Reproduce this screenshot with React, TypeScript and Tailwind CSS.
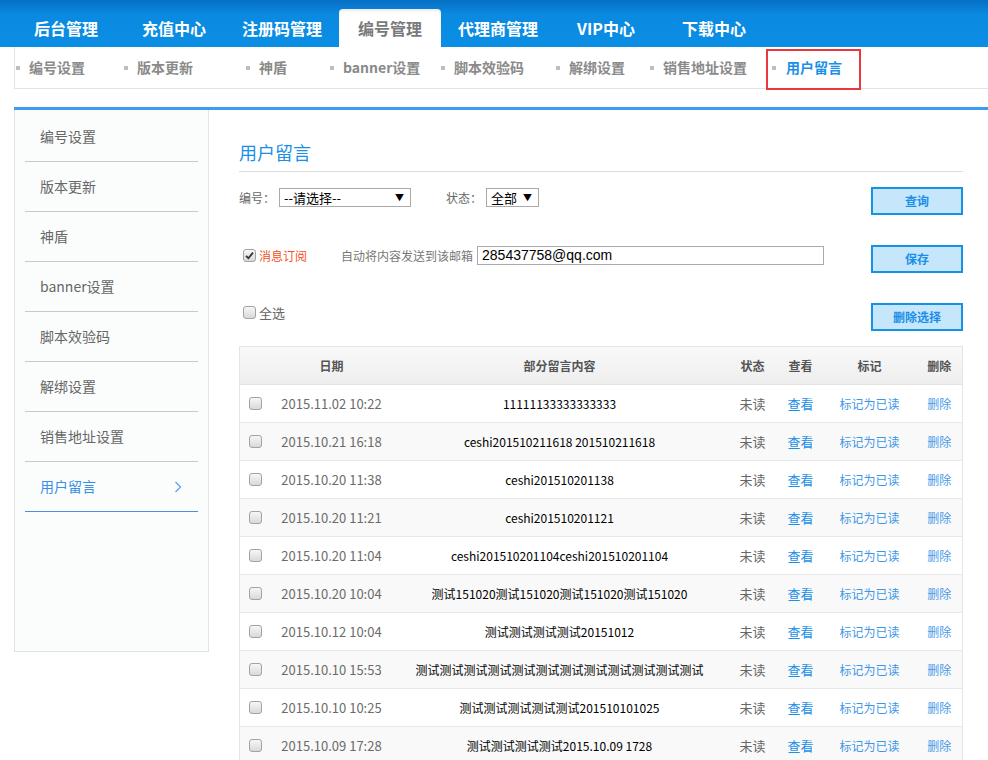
import React from "react";

const TABS = ["后台管理", "充值中心", "注册码管理", "编号管理", "代理商管理", "VIP中心", "下载中心"];

// bullet-to-bullet widths of the second-level menu
const SUBNAV: { label: string; w: string }[] = [
  { label: "编号设置", w: "w-[108px]" },
  { label: "版本更新", w: "w-[122px]" },
  { label: "神盾", w: "w-[84px]" },
  { label: "banner设置", w: "w-[111px]" },
  { label: "脚本效验码", w: "w-[115px]" },
  { label: "解绑设置", w: "w-[94px]" },
  { label: "销售地址设置", w: "w-[122px]" },
];

const SIDE = ["编号设置", "版本更新", "神盾", "banner设置", "脚本效验码", "解绑设置", "销售地址设置"];

const ROWS: [string, string][] = [
  ["2015.11.02 10:22", "11111133333333333"],
  ["2015.10.21 16:18", "ceshi201510211618 201510211618"],
  ["2015.10.20 11:38", "ceshi201510201138"],
  ["2015.10.20 11:21", "ceshi201510201121"],
  ["2015.10.20 11:04", "ceshi201510201104ceshi201510201104"],
  ["2015.10.20 10:04", "测试151020测试151020测试151020测试151020"],
  ["2015.10.12 10:04", "测试测试测试测试20151012"],
  ["2015.10.10 15:53", "测试测试测试测试测试测试测试测试测试测试测试测试"],
  ["2015.10.10 10:25", "测试测试测试测试测试201510101025"],
  ["2015.10.09 17:28", "测试测试测试测试2015.10.09 1728"],
];

function Check({ checked = false }: { checked?: boolean }) {
  return (
    <span className="inline-flex w-[13px] h-[13px] shrink-0 items-center justify-center rounded-[3px] border border-[#a3a3a3] bg-linear-to-b from-[#f7f7f7] to-[#d9d9d9]">
      {checked && (
        <svg width="9" height="9" viewBox="0 0 9 9">
          <path d="M1 4.8 L3.4 7.2 L8 1.6" fill="none" stroke="#333" strokeWidth="1.8" />
        </svg>
      )}
    </span>
  );
}

function Select({ value, w }: { value: string; w: string }) {
  return (
    <div className={`${w} h-[19px] flex items-center justify-between border border-[#a9a9a9] bg-white pl-[4px] pr-[6px] text-[13px] text-black leading-none`}>
      <span>{value}</span>
      <span className="text-[9px]">▼</span>
    </div>
  );
}

function Btn({ label }: { label: string }) {
  return (
    <button className="ml-auto w-[92px] h-[28px] shrink-0 border-2 border-[#1592e6] bg-[#c6e6fc] text-[12px] font-bold text-[#1a8fe8]">
      {label}
    </button>
  );
}

export default function App() {
  return (
    <div className="w-[988px] h-[760px] overflow-hidden bg-white font-['Noto_Sans_CJK_SC','Microsoft_YaHei',sans-serif]">
      {/* top tabs */}
      <header className="h-[47px] bg-linear-to-b from-[#066fc4] via-[#0a8ae0] via-30% to-[#0a8ee4] flex items-end pl-[15px] gap-[6px]">
        {TABS.map((t) => (
          <div
            key={t}
            className={`w-[102px] h-[38px] flex items-center justify-center text-[16px] font-bold ${
              t === "编号管理"
                ? "bg-white rounded-t-[4px] text-[#7a7a7a] shadow-[inset_0_2px_2px_rgba(0,0,0,0.08)]"
                : "text-white"
            }`}
          >
            {t}
          </div>
        ))}
      </header>

      {/* second-level menu */}
      <nav className="ml-[14px] h-[42px] border-l border-b border-[#e3e3e3] flex items-center pl-[1px]">
        {SUBNAV.map((s) => (
          <div key={s.label} className={`${s.w} flex items-center`}>
            <span className="w-[4px] h-[4px] bg-[#bdbdbd]" />
            <span className="ml-[9px] text-[14px] font-bold text-[#8a8a8a]">{s.label}</span>
          </div>
        ))}
        <div className="relative flex items-center h-full">
          <span className="w-[4px] h-[4px] bg-[#bdbdbd]" />
          <span className="ml-[10px] text-[14px] font-bold text-[#1a8fe8]">用户留言</span>
          <span className="absolute -left-[6px] top-[2px] w-[95px] h-[41px] border-2 border-[#e8383d]" />
        </div>
      </nav>

      <div className="mt-[18px] ml-[14px] h-[3px] bg-[#3a9cf2]" />

      <div className="flex items-start">
        {/* sidebar */}
        <aside className="ml-[14px] w-[195px] h-[542px] shrink-0 border border-t-0 border-[#e3e3e3] bg-[#fbfdfd] pt-[2px] px-[10px]">
          {SIDE.map((s) => (
            <div key={s} className="h-[50px] flex items-center border-b border-[#c9c9c9] pl-[15px] text-[14px] text-[#666]">
              {s}
            </div>
          ))}
          <div className="h-[50px] flex items-center justify-between border-b border-[#4a90e2] pl-[15px] pr-[16px] text-[14px] text-[#3a8ee6]">
            <span>用户留言</span>
            <svg width="8" height="12" viewBox="0 0 8 12">
              <path d="M1.5 1 L6.5 6 L1.5 11" fill="none" stroke="#5aa5ef" strokeWidth="1.3" />
            </svg>
          </div>
        </aside>

        {/* main */}
        <main className="flex-1 pl-[30px] pr-[26px]">
          <h1 className="pt-[30px] pb-[7px] border-b border-[#dcdcdc] text-[18px] leading-[24px] text-[#1a8fe8]">用户留言</h1>

          <div className="mt-[15px] flex items-start h-[28px]">
            <span className="mt-[1px] h-[19px] flex items-center text-[12px] text-[#666]">编号：</span>
            <div className="mt-[1px] ml-[4px]">
              <Select value="--请选择--" w="w-[132px]" />
            </div>
            <span className="mt-[1px] ml-[35px] h-[19px] flex items-center text-[12px] text-[#666]">状态：</span>
            <div className="mt-[1px] ml-[4px]">
              <Select value="全部" w="w-[53px]" />
            </div>
            <Btn label="查询" />
          </div>

          <div className="mt-[30px] flex items-start h-[28px]">
            <div className="mt-[1px] h-[19px] flex items-center pl-[4px]">
              <Check checked />
              <span className="ml-[3px] text-[12px] text-[#f5511e]">消息订阅</span>
            </div>
            <span className="mt-[1px] ml-[34px] h-[19px] flex items-center text-[12px] text-[#777]">自动将内容发送到该邮箱</span>
            <div className="mt-[1px] ml-[4px] w-[347px] h-[19px] flex items-center border border-[#aaa] pl-[4px] font-['Liberation_Sans',sans-serif] text-[14px] text-black">
              285437758@qq.com
            </div>
            <Btn label="保存" />
          </div>

          <div className="mt-[30px] flex items-start h-[28px]">
            <div className="h-[19px] flex items-center pl-[4px]">
              <Check />
              <span className="ml-[3px] text-[13px] text-[#666]">全选</span>
            </div>
            <Btn label="删除选择" />
          </div>

          <table className="mt-[15px] w-[723px] table-fixed border-collapse border border-[#e5e5e5] text-center">
            <colgroup>
              <col className="w-[31px]" />
              <col className="w-[122px]" />
              <col className="w-[334px]" />
              <col className="w-[52px]" />
              <col className="w-[44px]" />
              <col className="w-[94px]" />
              <col className="w-[46px]" />
            </colgroup>
            <thead>
              <tr className="h-[38px] bg-linear-to-b from-[#f9f9f9] to-[#eeeeee] border-b border-[#e3e3e3] text-[12px] font-bold text-[#555]">
                <th />
                <th className="font-bold">日期</th>
                <th className="font-bold">部分留言内容</th>
                <th className="font-bold">状态</th>
                <th className="font-bold">查看</th>
                <th className="font-bold">标记</th>
                <th className="font-bold">删除</th>
              </tr>
            </thead>
            <tbody>
              {ROWS.map(([d, c], i) => (
                <tr key={d + i} className={`h-[38px] border-b border-[#e8e8e8] ${i % 2 ? "bg-[#f9f9f9]" : "bg-white"}`}>
                  <td>
                    <div className="flex justify-center">
                      <Check />
                    </div>
                  </td>
                  <td className="text-[13px] text-[#6b6b6b]">{d}</td>
                  <td className="text-[12px] text-black whitespace-nowrap">{c}</td>
                  <td className="text-[13px] text-[#666]">未读</td>
                  <td className="text-[13px] text-[#1a8fe8]">查看</td>
                  <td className="text-[12px] text-[#3d97e8]">标记为已读</td>
                  <td className="text-[12px] text-[#4a9ae8]">删除</td>
                </tr>
              ))}
            </tbody>
          </table>
        </main>
      </div>
    </div>
  );
}
